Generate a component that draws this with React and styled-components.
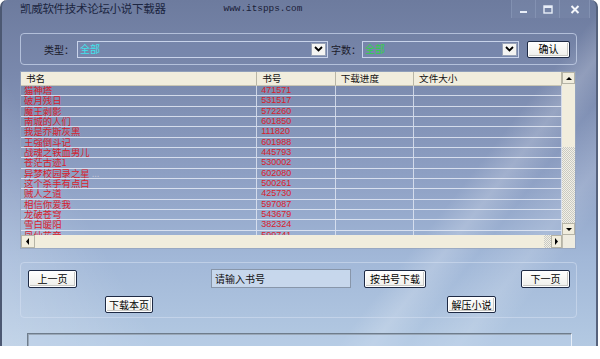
import React from "react";
import styled, { createGlobalStyle } from "styled-components";

const GlobalStyle = createGlobalStyle`
  body {
    margin: 0;
    background: #ffffff;
    font-family: "Noto Sans CJK SC", "Liberation Sans", sans-serif;
  }
`;

const books = [
  ["猫神塔", "471571"],
  ["破月残日", "531517"],
  ["魔王剥影", "572260"],
  ["南城的人们", "601850"],
  ["我是乔斯灰黑", "111820"],
  ["王强倒斗记", "601988"],
  ["战魂之铁血男儿", "445793"],
  ["苍茫古迹1", "530002"],
  ["异梦校园录之星", "602080", true],
  ["这个杀手有点白", "500261"],
  ["贼人之道", "425730"],
  ["相信你爱我", "597087"],
  ["龙破苍穹", "543679"],
  ["雪白暖阳", "382324"],
  ["凤仙花帝", "599741"],
];

const columns = [
  { title: "书名", width: 238 },
  { title: "书号", width: 79 },
  { title: "下载进度", width: 79 },
  { title: "文件大小", width: 149 },
];

function Arrow({ dir }) {
  const pts = {
    up: "1,5 4,2 7,5",
    down: "1,2 4,5 7,2",
    left: "5,0 2,3.5 5,7",
    right: "2,0 5,3.5 2,7",
  };
  return (
    <svg width="8" height="7" viewBox="0 0 8 7">
      <polygon points={pts[dir]} fill="#000" />
    </svg>
  );
}

function Chevron() {
  return (
    <svg width="9" height="6" viewBox="0 0 9 6">
      <polyline points="1,1 4.5,4.5 8,1" fill="none" stroke="#000" strokeWidth="1.8" />
    </svg>
  );
}

function App() {
  return (
    <>
      <GlobalStyle />
      <Window>
        {/* title bar */}
        <TitleBar>
          <Title>凯威软件技术论坛小说下载器</Title>
          <Url>www.itspps.com</Url>
          <Controls>
            <CtrlButton>
              <svg width="9" height="9" viewBox="0 0 9 9">
                <rect x="1" y="6" width="7" height="2" fill="#e8eef8" />
              </svg>
            </CtrlButton>
            <CtrlButton>
              <svg width="10" height="9" viewBox="0 0 10 9">
                <rect x="1" y="1" width="8" height="7" fill="none" stroke="#e8eef8" strokeWidth="1.4" />
                <rect x="1" y="1" width="8" height="2" fill="#e8eef8" />
              </svg>
            </CtrlButton>
            <CtrlButton $wide>
              <svg width="10" height="9" viewBox="0 0 10 9">
                <path d="M1.5 1 L8.5 8 M8.5 1 L1.5 8" stroke="#f4f6fa" strokeWidth="2" />
              </svg>
            </CtrlButton>
          </Controls>
        </TitleBar>

        {/* filter */}
        <FilterGroup>
          <Label>类型：</Label>
          <Combo $width={251}>
            <ComboText $color="#3fe3ec">全部</ComboText>
            <DropButton>
              <Chevron />
            </DropButton>
          </Combo>
          <Label $tight>字数：</Label>
          <Combo $width={157}>
            <ComboText $color="#2fd24a">全部</ComboText>
            <DropButton>
              <Chevron />
            </DropButton>
          </Combo>
          <Button $w={43} $h={17} $ml={8}>
            确认
          </Button>
        </FilterGroup>

        {/* list */}
        <ListView>
          <ListMain>
            <HeaderRow>
              {columns.map((c) => (
                <HeaderCell key={c.title} style={{ width: c.width }}>
                  {c.title}
                </HeaderCell>
              ))}
            </HeaderRow>
            <Body>
              {books.map(([name, id, more]) => (
                <Row key={id}>
                  <Cell style={{ width: columns[0].width }}>
                    {name}
                    {more && <Dots>...</Dots>}
                  </Cell>
                  <Cell $num style={{ width: columns[1].width }}>
                    {id}
                  </Cell>
                  <Cell style={{ width: columns[2].width }} />
                  <Cell style={{ width: columns[3].width }} />
                </Row>
              ))}
            </Body>
          </ListMain>
          <VScroll>
            <ScrollBtn $h={12}>
              <Arrow dir="up" />
            </ScrollBtn>
            <Thumb style={{ height: 63 }} />
            <Track />
            <ScrollBtn $h={12}>
              <Arrow dir="down" />
            </ScrollBtn>
          </VScroll>
          <HScroll>
            <ScrollBtn $w={14}>
              <Arrow dir="left" />
            </ScrollBtn>
            <Thumb style={{ flex: 1 }} />
            <Track style={{ flex: "0 0 7px" }} />
            <ScrollBtn $w={11}>
              <Arrow dir="right" />
            </ScrollBtn>
          </HScroll>
          <Corner />
        </ListView>

        {/* actions */}
        <ActionGroup>
          <ActionRow>
            <Button $w={49} $ml={7}>
              上一页
            </Button>
            <BookInput>请输入书号</BookInput>
            <Button $w={62} $ml={13}>
              按书号下载
            </Button>
            <Button $w={49} $ml="auto">
              下一页
            </Button>
          </ActionRow>
          <ActionRow $second>
            <Button $w={48} $h={17} $ml={84}>
              下载本页
            </Button>
            <Button $w={49} $h={17} $ml={294}>
              解压小说
            </Button>
          </ActionRow>
        </ActionGroup>

        <LogPanel />
      </Window>
    </>
  );
}

const Window = styled.div`
  width: 598px;
  height: 346px;
  box-sizing: border-box;
  border-left: 2px solid #4c5872;
  border-right: 2px solid #56627c;
  border-radius: 7px 7px 0 0;
  overflow: hidden;
  display: flex;
  flex-direction: column;
  background: linear-gradient(
      128deg,
      transparent 0%,
      transparent 70%,
      rgba(255, 255, 255, 0.18) 74%,
      transparent 78%,
      rgba(255, 255, 255, 0.14) 84%,
      transparent 88%
    ),
    linear-gradient(
      60deg,
      rgba(255, 255, 255, 0.22) 0%,
      rgba(255, 255, 255, 0.1) 12%,
      transparent 20%
    ),
    linear-gradient(180deg, #6d7b9e 0%, #7a89ad 22%, #8d9fc3 50%, #a2b8d8 75%, #b3c9e2 100%);
`;

const TitleBar = styled.div`
  height: 20px;
  display: flex;
  align-items: flex-start;
  padding-left: 18px;
`;

const Title = styled.div`
  font-size: 11.5px;
  line-height: 17px;
  color: #1b2540;
  letter-spacing: -0.3px;
`;

const Url = styled.div`
  margin-left: 58px;
  margin-top: 3px;
  font-family: "Liberation Mono", "DejaVu Sans Mono", monospace;
  font-size: 9.4px;
  line-height: 12px;
  color: #1a2038;
`;

const Controls = styled.div`
  margin-left: auto;
  margin-right: 6px;
  display: flex;
  height: 18px;
  border-left: 1px solid rgba(150, 165, 195, 0.5);
`;

const CtrlButton = styled.div`
  width: ${(p) => (p.$wide ? 29 : 23)}px;
  height: 18px;
  display: flex;
  align-items: center;
  justify-content: center;
  border-right: 1px solid rgba(150, 165, 195, 0.45);
  background: rgba(140, 155, 185, 0.2);
`;

const FilterGroup = styled.div`
  margin: 13px 19px 0 18px;
  height: 32px;
  box-sizing: border-box;
  border: 1px solid rgba(200, 212, 235, 0.75);
  border-radius: 4px;
  display: flex;
  align-items: center;
  padding-left: 23px;
`;

const Label = styled.div`
  font-size: 10px;
  color: #1a1a2a;
  width: ${(p) => (p.$tight ? 34 : 33)}px;
  padding-left: ${(p) => (p.$tight ? 3 : 0)}px;
  box-sizing: border-box;
`;

const Combo = styled.div`
  width: ${(p) => p.$width}px;
  height: 17px;
  box-sizing: border-box;
  border: 1px solid rgba(215, 225, 245, 0.85);
  background: rgba(120, 137, 175, 0.55);
  display: flex;
  align-items: center;
  justify-content: space-between;
  padding: 0 1px 0 2px;
`;

const ComboText = styled.span`
  font-size: 10px;
  line-height: 14px;
  color: ${(p) => p.$color};
`;

const DropButton = styled.div`
  width: 15px;
  height: 13px;
  background: #f4f4f2;
  border: 1px solid #9aa4b8;
  box-sizing: border-box;
  display: flex;
  align-items: center;
  justify-content: center;
`;

const Button = styled.div`
  width: ${(p) => p.$w}px;
  height: ${(p) => p.$h || 18}px;
  margin-left: ${(p) => (typeof p.$ml === "number" ? `${p.$ml}px` : p.$ml || 0)};
  box-sizing: border-box;
  border: 1px solid #1e2a44;
  border-radius: 2px;
  box-shadow: inset 0 0 0 1px #ffffff, inset -1px -1px 0 1px #c8c8c4;
  background: linear-gradient(#ffffff, #eeeeea);
  font-size: 10px;
  line-height: 14px;
  color: #000;
  display: flex;
  align-items: center;
  justify-content: center;
  flex-shrink: 0;
`;

const ListView = styled.div`
  margin: 6px 20px 0 18px;
  height: 178px;
  display: grid;
  grid-template-columns: 1fr 13px;
  grid-template-rows: 1fr 13px;
  border: 1px solid rgba(150, 165, 190, 0.8);
  box-sizing: border-box;
`;

const ListMain = styled.div`
  overflow: hidden;
  display: flex;
  flex-direction: column;
`;

const HeaderRow = styled.div`
  display: flex;
  height: 14px;
  flex-shrink: 0;
  background: #f1eddd;
  border-bottom: 1px solid #c9c6b4;
  box-sizing: border-box;
`;

const HeaderCell = styled.div`
  box-sizing: border-box;
  padding-left: 5px;
  font-size: 9.6px;
  line-height: 13px;
  color: #111;
  border-right: 1px solid #b9b6a6;
`;

const Body = styled.div`
  flex: 1;
  overflow: hidden;
`;

const Row = styled.div`
  display: flex;
  height: 10.35px;
  box-sizing: border-box;
  border-bottom: 1px solid rgba(232, 238, 248, 0.8);
`;

const Cell = styled.div`
  box-sizing: border-box;
  padding-left: ${(p) => (p.$num ? 4 : 3)}px;
  font-family: ${(p) =>
    p.$num ? `"Liberation Sans", sans-serif` : `"Noto Sans CJK SC", sans-serif`};
  font-size: ${(p) => (p.$num ? 9 : 9.4)}px;
  line-height: 9.5px;
  color: #d8202c;
  white-space: nowrap;
  border-right: 1px solid rgba(232, 238, 248, 0.75);
`;

const Dots = styled.span`
  color: #c8c8d8;
  margin-left: 2px;
`;

const VScroll = styled.div`
  display: flex;
  flex-direction: column;
`;

const HScroll = styled.div`
  display: flex;
`;

const ScrollBtn = styled.div`
  ${(p) => (p.$h ? `height: ${p.$h}px;` : "")}
  ${(p) => (p.$w ? `width: ${p.$w}px;` : "")}
  flex-shrink: 0;
  box-sizing: border-box;
  background: #f1eddd;
  border: 1px solid #b6b4a6;
  display: flex;
  align-items: center;
  justify-content: center;
`;

const Thumb = styled.div`
  background: #f1eddd;
  flex-shrink: 0;
`;

const Track = styled.div`
  flex: 1;
  background: repeating-conic-gradient(#c9c9c2 0 25%, #f2f0e6 0 50%) 0 0 / 2px 2px;
`;

const Corner = styled.div`
  background: #efece0;
  border-left: 1px solid #c0bdb0;
`;

const ActionGroup = styled.div`
  margin: 13px 19px 0 18px;
  height: 56px;
  box-sizing: border-box;
  border: 1px solid rgba(210, 222, 240, 0.6);
  border-radius: 4px;
  display: flex;
  flex-direction: column;
`;

const ActionRow = styled.div`
  display: flex;
  align-items: center;
  margin-top: ${(p) => (p.$second ? 8 : 6)}px;
  padding-right: 6px;
`;

const BookInput = styled.div`
  margin-left: 134px;
  width: 140px;
  height: 19px;
  box-sizing: border-box;
  border: 1px solid #8896aa;
  background: rgba(205, 220, 238, 0.85);
  font-size: 10px;
  line-height: 17px;
  padding-left: 3px;
  color: #111;
`;

const LogPanel = styled.div`
  margin: 15px 24px 0 25px;
  flex: 1;
  border-top: 1px solid #6e7c8c;
  border-left: 1px solid #6e7c8c;
  border-right: 1px solid #e6eef8;
  box-shadow: inset 1px 1px 0 #9aa8b8;
  background: rgba(190, 210, 235, 0.35);
`;

export default App;
